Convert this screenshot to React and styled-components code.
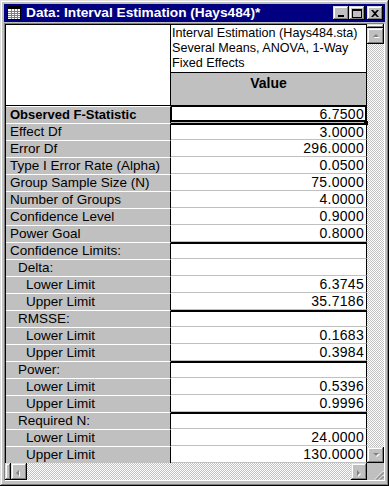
import React from 'react';
import styled, { createGlobalStyle } from 'styled-components';

const rows = [
  { label: 'Observed F-Statistic', value: '6.7500', bold: true, selected: true },
  { label: 'Effect Df', value: '3.0000', group: true },
  { label: 'Error Df', value: '296.0000' },
  { label: 'Type I Error Rate (Alpha)', value: '0.0500' },
  { label: 'Group Sample Size (N)', value: '75.0000' },
  { label: 'Number of Groups', value: '4.0000' },
  { label: 'Confidence Level', value: '0.9000' },
  { label: 'Power Goal', value: '0.8000' },
  { label: 'Confidence Limits:', value: '', group: true },
  { label: 'Delta:', value: '', indent: 1 },
  { label: 'Lower Limit', value: '6.3745', indent: 2 },
  { label: 'Upper Limit', value: '35.7186', indent: 2 },
  { label: 'RMSSE:', value: '', indent: 1, group: true },
  { label: 'Lower Limit', value: '0.1683', indent: 2 },
  { label: 'Upper Limit', value: '0.3984', indent: 2 },
  { label: 'Power:', value: '', indent: 1, group: true },
  { label: 'Lower Limit', value: '0.5396', indent: 2 },
  { label: 'Upper Limit', value: '0.9996', indent: 2 },
  { label: 'Required N:', value: '', indent: 1, group: true },
  { label: 'Lower Limit', value: '24.0000', indent: 2 },
  { label: 'Upper Limit', value: '130.0000', indent: 2 },
];

const GlobalStyle = createGlobalStyle`
  html, body {
    margin: 0;
    padding: 0;
    background: #c0c0c0;
  }
  body {
    font-family: "Liberation Sans", Arial, sans-serif;
  }
`;

const raised = `
  background: #c0c0c0;
  box-shadow: inset -1px -1px #000, inset 1px 1px #dfdfdf,
    inset -2px -2px #808080, inset 2px 2px #fff;
`;

const Window = styled.div`
  width: 389px;
  height: 486px;
  box-sizing: border-box;
  padding: 4px 4px 5px 4px;
  display: flex;
  flex-direction: column;
  gap: 1px;
  ${raised}
`;

const TitleBar = styled.div`
  height: 18px;
  background: #000080;
  display: flex;
  align-items: center;
  padding: 0 2px 0 2px;
  gap: 4px;
`;

const TitleText = styled.div`
  flex: 1;
  color: #fff;
  font-weight: bold;
  font-size: 13.7px;
  line-height: 18px;
  white-space: nowrap;
`;

const Buttons = styled.div`
  display: flex;
  align-items: center;
`;

const CapButton = styled.div`
  width: 16px;
  height: 14px;
  margin-left: ${p => (p.$gap ? '2px' : '0')};
  display: flex;
  align-items: center;
  justify-content: center;
  ${raised}
`;

const Client = styled.div`
  flex: 1;
  display: flex;
  flex-direction: column;
  border: 1px solid;
  border-color: #808080 #fff #fff #808080;
  background: #c0c0c0;
`;

const Body = styled.div`
  display: flex;
  height: 439px;
`;

const Sheet = styled.div`
  width: 362px;
  display: grid;
  grid-template-columns: 165px 196px;
  grid-template-rows: 82px;
  grid-auto-rows: 17px;
  align-content: start;
  border-left: 1px solid #000;
  box-sizing: border-box;
  font-size: 14px;
  color: #000;
  background: #c0c0c0;
`;

const Corner = styled.div`
  box-sizing: border-box;
  background: #fff;
  border-top: 1px solid #000;
  border-bottom: 1px solid #000;
  border-right: 1px solid #000;
`;

const HeadRight = styled.div`
  box-sizing: border-box;
  display: flex;
  flex-direction: column;
  border-top: 1px solid #000;
  border-bottom: 1px solid #000;
  border-right: 1px solid #000;
  min-width: 0;
`;

const HeadTitle = styled.div`
  height: 48px;
  box-sizing: border-box;
  background: #fff;
  padding: 1px 0 0 1px;
  font-size: 12.6px;
  line-height: 15px;
  white-space: nowrap;
  overflow: hidden;
  border-bottom: 1px solid #000;
`;

const HeadValue = styled.div`
  flex: 1;
  background: #c0c0c0;
  text-align: center;
  font-weight: bold;
  font-size: 14px;
  line-height: 16px;
  padding-top: 2px;
`;

const Row = styled.div`
  display: contents;
`;

const Label = styled.div`
  height: 17px;
  box-sizing: border-box;
  border-top: 1px solid #fff;
  border-right: 1px solid #000;
  background: #c0c0c0;
  padding-left: ${p => 4 + p.$indent * 8}px;
  line-height: 16px;
  white-space: nowrap;
  font-weight: ${p => (p.$bold ? 'bold' : 'normal')};
  font-size: ${p => (p.$bold ? '13px' : '13.5px')};
`;

const Value = styled.div`
  position: relative;
  height: 17px;
  box-sizing: border-box;
  background: #fff;
  border-right: 1px solid #000;
  border-bottom: 1px solid #c0c0c0;
  text-align: right;
  padding-right: 2px;
  letter-spacing: 0.3px;
  box-shadow: ${p =>
    p.$selected
      ? 'inset 0 0 0 1px #000, inset 0 -2px #000'
      : p.$group
      ? 'inset 0 2px #000'
      : 'none'};
  line-height: ${p => (p.$group ? '18px' : '16px')};
`;

const Handle = styled.span`
  position: absolute;
  right: -2px;
  bottom: -3px;
  width: 4px;
  height: 4px;
  background: #000;
`;

const Checker = `
  background-color: #fff;
  background-image: repeating-conic-gradient(#c0c0c0 0% 25%, #fff 0% 50%);
  background-size: 2px 2px;
`;

const VScroll = styled.div`
  width: 17px;
  display: flex;
  flex-direction: column;
  ${Checker}
`;

const Track = styled.div`
  flex: 1;
`;

const Splitter = styled.div`
  ${raised}
  width: ${p => p.$w}px;
  height: ${p => p.$h}px;
  flex: none;
`;

const ArrowButton = styled.div`
  ${raised}
  width: ${p => p.$w || 17}px;
  height: ${p => p.$h || 16}px;
  flex: none;
  display: flex;
  align-items: center;
  justify-content: center;
`;

const HScroll = styled.div`
  height: 17px;
  display: flex;
  ${Checker}
`;

const Grip = styled.div`
  width: 17px;
  height: 17px;
  background: #c0c0c0;
  display: flex;
  align-items: flex-end;
  justify-content: flex-end;
`;

const arrows = {
  up: '3,6 6,3 9,6',
  down: '3,3 6,6 9,3',
  left: '6,3 3,6 6,9',
  right: '4,3 7,6 4,9',
};

function Arrow({ dir }) {
  return (
    <svg width="12" height="10" viewBox="0 0 12 10">
      <polygon points={arrows[dir]} fill="#fff" transform="translate(1 1)" />
      <polygon points={arrows[dir]} fill="#808080" />
    </svg>
  );
}

function SheetIcon() {
  return (
    <svg width="16" height="16" viewBox="0 0 16 16">
      <rect x="1.5" y="1.5" width="13" height="13" fill="#fff" stroke="#000" />
      <rect x="2" y="2" width="12" height="2" fill="#000" />
      {[6, 8, 10, 12].map(y => (
        <line key={y} x1="2" x2="14" y1={y + 0.5} y2={y + 0.5} stroke="#808080" />
      ))}
      {[5, 8, 11].map(x => (
        <line key={x} x1={x + 0.5} x2={x + 0.5} y1="4" y2="14" stroke="#808080" />
      ))}
    </svg>
  );
}

export default function App() {
  return (
    <>
      <GlobalStyle />
      <Window>
        <TitleBar>
          <SheetIcon />
          <TitleText>Data: Interval Estimation (Hays484)*</TitleText>
          <Buttons>
            <CapButton>
              <svg width="8" height="7" viewBox="0 0 8 7">
                <rect x="1" y="5" width="6" height="2" fill="#000" />
              </svg>
            </CapButton>
            <CapButton>
              <svg width="10" height="9" viewBox="0 0 10 9">
                <rect x="0.5" y="0.5" width="9" height="8" fill="none" stroke="#000" />
                <rect x="0" y="0" width="10" height="2" fill="#000" />
              </svg>
            </CapButton>
            <CapButton $gap>
              <svg width="8" height="7" viewBox="0 0 8 7">
                <path d="M0 0 L2 0 L4 2 L6 0 L8 0 L5 3.5 L8 7 L6 7 L4 5 L2 7 L0 7 L3 3.5 Z" fill="#000" />
              </svg>
            </CapButton>
          </Buttons>
        </TitleBar>
        <Client>
          <Body>
            <Sheet>
              <Corner />
              <HeadRight>
                <HeadTitle>
                  Interval Estimation (Hays484.sta)
                  <br />
                  Several Means, ANOVA, 1-Way
                  <br />
                  Fixed Effects
                </HeadTitle>
                <HeadValue>Value</HeadValue>
              </HeadRight>
              {rows.map((r, i) => (
                <Row key={i}>
                  <Label $indent={r.indent || 0} $bold={r.bold}>
                    {r.label}
                  </Label>
                  <Value $group={r.group} $selected={r.selected}>
                    {r.value}
                    {r.selected && <Handle />}
                  </Value>
                </Row>
              ))}
            </Sheet>
            <VScroll>
              <Splitter $w={17} $h={4} />
              <ArrowButton>
                <Arrow dir="up" />
              </ArrowButton>
              <Track />
              <ArrowButton>
                <Arrow dir="down" />
              </ArrowButton>
            </VScroll>
          </Body>
          <HScroll>
            <Splitter $w={6} $h={17} />
            <ArrowButton $w={16} $h={17}>
              <Arrow dir="left" />
            </ArrowButton>
            <Track />
            <ArrowButton $w={16} $h={17}>
              <Arrow dir="right" />
            </ArrowButton>
            <Grip>
              <svg width="13" height="13" viewBox="0 0 13 13">
                {[0, 4, 8].map(o => (
                  <g key={o}>
                    <line x1={12 - o} y1="12.5" x2="12.5" y2={12 - o} stroke="#fff" />
                    <line x1={13 - o} y1="12.5" x2="12.5" y2={13 - o} stroke="#808080" />
                    <line x1={14 - o} y1="12.5" x2="12.5" y2={14 - o} stroke="#808080" />
                  </g>
                ))}
              </svg>
            </Grip>
          </HScroll>
        </Client>
      </Window>
    </>
  );
}
